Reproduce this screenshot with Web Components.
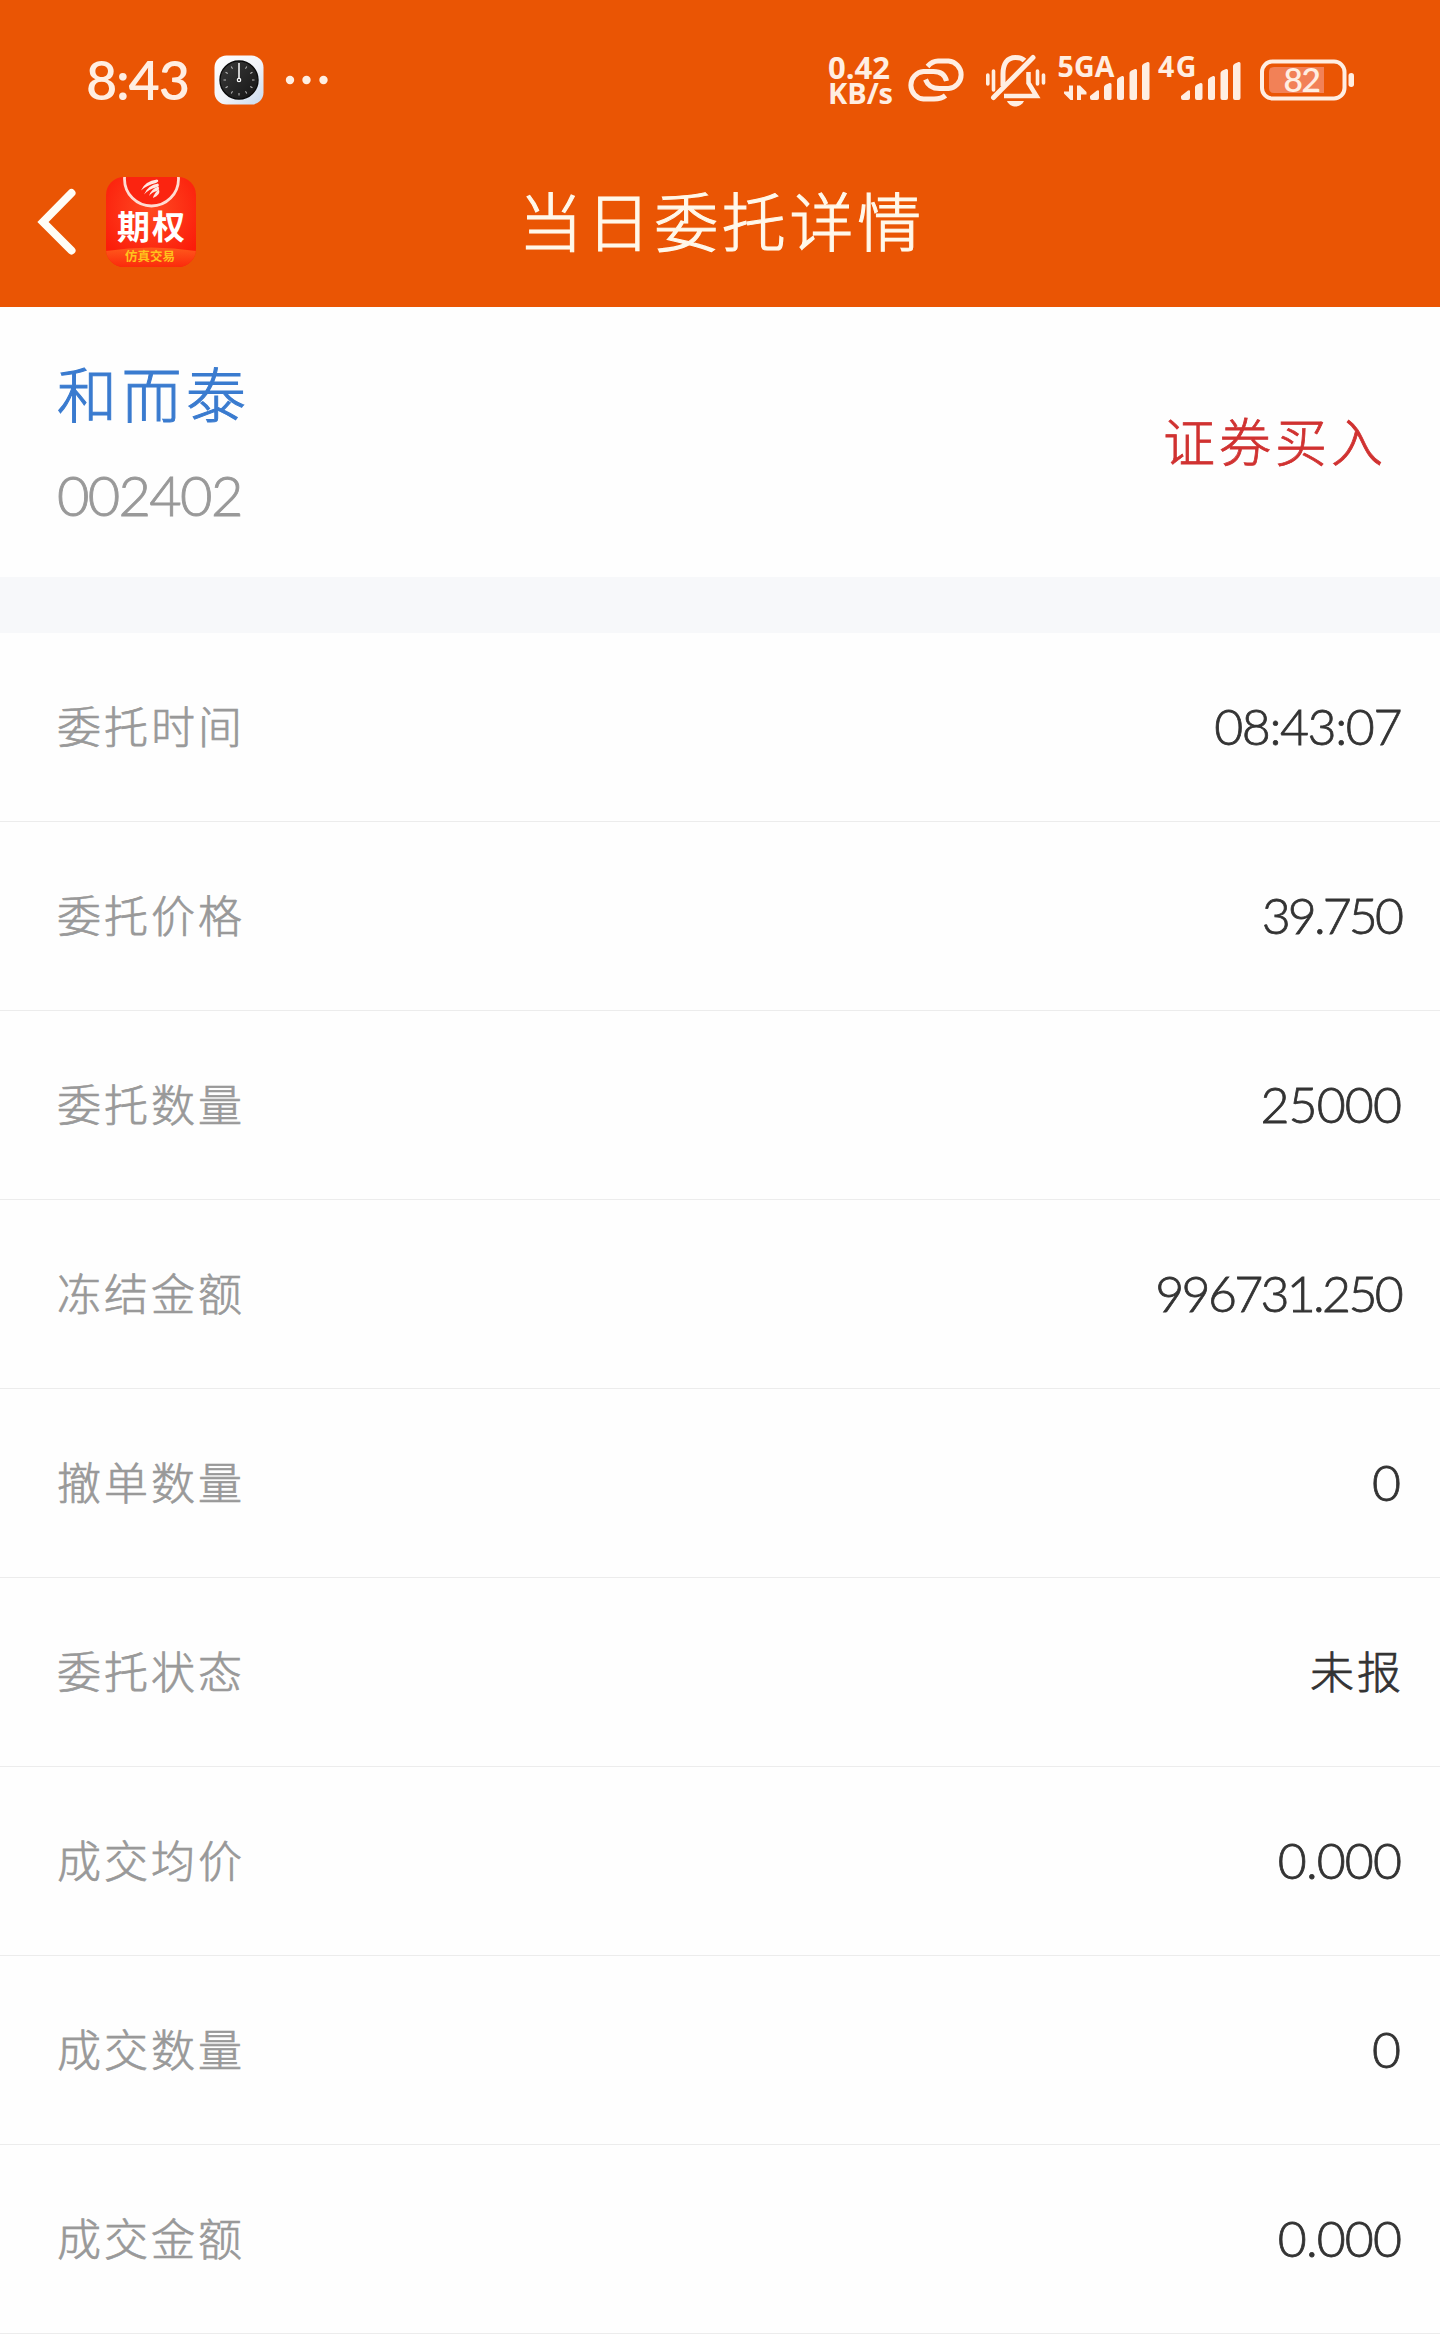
<!DOCTYPE html>
<html lang="zh-CN">
<head>
<meta charset="UTF-8">
<title>当日委托详情</title>
<style>
  html, body {
    margin: 0;
    background: #fff;
  }
  body {
    width: 1440px;
    height: 2350px;
    overflow: hidden;
    font-family: Lato, "Noto Sans CJK SC", sans-serif;
  }
</style>
</head>
<body>
<order-page></order-page>

<script>
class StatusBar extends HTMLElement {
  constructor() {
    super();
    this.attachShadow({ mode: "open" });
  }

  connectedCallback() {
    this.shadowRoot.innerHTML = `
      <style>
        :host {
          display: flex;
          justify-content: space-between;
          align-items: center;
          height: 160px;
          padding: 0 86px 0 86px;
          box-sizing: border-box;
          color: #ffeee2;
        }
        .side { display: flex; align-items: center; }
        svg { display: block; fill: currentColor; overflow: visible; }
        text { font-family: "Open Sans", sans-serif; font-weight: 700; }
        text.num { font-family: Lato, sans-serif; font-weight: 600; }
        .clock { margin-left: 24px; }
        .dots { margin-left: 21px; }
        .link { margin-left: 10px; }
        .bell { margin-left: 19px; }
        .sig { margin-left: 11px; }
        .sig2 { margin-left: 6px; }
        .battery { margin-left: 18px; }
      </style>
      <div class="side">
        <svg width="104" height="80" viewBox="86 40 104 80">
          <text class="num" x="86" y="99.5" font-size="54" textLength="104">8:43</text>
        </svg>
        <svg class="clock" width="50" height="50" viewBox="0 0 50 50">
          <defs>
            <linearGradient id="plate" x1="0" y1="0" x2="1" y2="1">
              <stop offset="0" stop-color="#fff"/><stop offset=".55" stop-color="#f1f3f8"/><stop offset="1" stop-color="#c8d9ee"/>
            </linearGradient>
            <linearGradient id="dial" x1="0" y1="0" x2="1" y2="1">
              <stop offset="0" stop-color="#3a3a3a"/><stop offset="1" stop-color="#161616"/>
            </linearGradient>
          </defs>
          <rect x=".5" y=".5" width="49" height="49" rx="12" fill="url(#plate)"/>
          <circle cx="25" cy="25" r="19" fill="url(#dial)" stroke="#0b0b0b" stroke-width="1.4"/>
          <g stroke="#bbb" stroke-width="1"></g>
          <path d="M25 8v16" stroke="#fff" stroke-width="1.5"/>
          <circle cx="25" cy="25" r="1.7" fill="#222" stroke="#fff" stroke-width="1.2"/>
        </svg>
        <svg class="dots" width="44" height="12" viewBox="0 0 44 12">
          <circle cx="5" cy="6" r="4.2"/><circle cx="21.500" cy="6" r="4.2"/><circle cx="38.500" cy="6" r="4.2"/>
        </svg>
      </div>
      <div class="side">
        <svg width="68" height="80" viewBox="828 40 68 80">
          <text x="828" y="79" font-size="31" textLength="62">0.42</text>
          <text x="828" y="104" font-size="29" textLength="65">KB/s</text>
        </svg>
        <svg class="link" width="60" height="60" viewBox="906 50 60 60" stroke="currentColor" stroke-width="5" style="fill:none">
          <path d="M927.500 66.500C931 62.500 934 61 938 61H948.500A13.800 13.800 0 0 1 948.500 88.500H939.500C932 88.500 928 86 925.500 79.500"/>
          <path d="M945.500 95.500C942 98.500 938 99 934 99H923.500A13.800 13.800 0 0 1 923.500 71.500H933.500C940 71.500 945 74.500 946.500 81"/>
        </svg>
        <svg class="bell" width="62" height="60" viewBox="985 50 62 60">
          <g fill="none" stroke="currentColor" stroke-width="4.500">
            <path d="M1003 86V74C1003 64 1007 57.500 1015.500 57.500C1019.500 57.500 1022.500 58.500 1024.500 60.500" stroke-width="5"/>
            <path d="M993.500 71v19M987.800 75v9M1037.500 71v13M1043.500 75v8" stroke-width="3.600" stroke-linecap="round"/>
            <path d="M1028.500 72V83L1036.500 96H1004"/>
            <path d="M993.500 97.500L1033 57.500" stroke-width="5" stroke-linecap="round"/>
          </g>
          <path d="M1007 101h17c-2 4-5 5.500-8.500 5.500s-6.500-1.500-8.500-5.500z"/>
        </svg>
        <svg class="sig" width="94" height="60" viewBox="1058 50 94 60">
          <text x="1057.500" y="77" font-size="28.500" textLength="57">5GA</text>
          <path d="M1069 85.500h4v14.500h-2.500l-6.500-6.500v-2h5zM1077 100V85.500h3l6.500 6.500v2.500h-5.500V100z"/>
          <path d="M1090 96l7-5.500q2-1 2 1V98q0 2-2 2h-5q-2 0-2-2zM1104 87q0-1.500 2-2.500l3.500-1.500q2-.5 2 1.500V98q0 2-2 2h-3.500q-2 0-2-2zM1117 80q0-1.500 2-2.500l3-1.500q2-.5 2 1.500V98q0 2-2 2h-3q-2 0-2-2zM1129.500 73q0-1.500 2-2.500l3.500-1.500q2-.5 2 1.500V98q0 2-2 2h-3.500q-2 0-2-2zM1142 66q0-1.500 2-2.500l3.500-1.500q2-.5 2 1.500V98q0 2-2 2h-3.500q-2 0-2-2z"/>
        </svg>
        <svg class="sig2" width="84" height="60" viewBox="1158 50 84 60">
          <text x="1158" y="77" font-size="28.500" textLength="38.500">4G</text>
          <path transform="translate(91)" d="M1090 96l7-5.500q2-1 2 1V98q0 2-2 2h-5q-2 0-2-2zM1104 87q0-1.500 2-2.500l3.500-1.500q2-.5 2 1.500V98q0 2-2 2h-3.500q-2 0-2-2zM1117 80q0-1.500 2-2.500l3-1.500q2-.5 2 1.500V98q0 2-2 2h-3q-2 0-2-2zM1129.500 73q0-1.500 2-2.500l3.500-1.500q2-.5 2 1.500V98q0 2-2 2h-3.500q-2 0-2-2zM1142 66q0-1.500 2-2.500l3.500-1.500q2-.5 2 1.500V98q0 2-2 2h-3.500q-2 0-2-2z"/>
        </svg>
        <svg class="battery" width="94" height="60" viewBox="1260 50 94 60">
          <rect x="1262" y="61.500" width="82.500" height="37" rx="10.500" fill="none" stroke="currentColor" stroke-width="4"/>
          <path d="M1324 67V93H1274q-5 0-5-5V72q0-5 5-5z" fill="#f28157"/>
          <rect x="1348.500" y="73" width="5.500" height="14" rx="2.700"/>
          <text class="num" x="1283.500" y="92" font-size="33.500" textLength="37.500">82</text>
        </svg>
      </div>
    `;
    // hour ticks round the dial, leaving out 12 where the hand points
    const ticks = this.shadowRoot.querySelector(".clock g");
    let marks = "";
    for (let i = 1; i < 12; i++) {
      marks += `<path d="M25 9.500v2.500" transform="rotate(${i * 30} 25 25)"/>`;
    }
    ticks.innerHTML = marks;
  }
}
customElements.define("status-bar", StatusBar);

class AppLogo extends HTMLElement {
  constructor() {
    super();
    this.attachShadow({ mode: "open" });
  }

  connectedCallback() {
    this.shadowRoot.innerHTML = `
      <style>
        :host { display: block; width: 90px; height: 90px; }
        svg { display: block; }
        text { font-family: "Noto Sans CJK SC", sans-serif; }
      </style>
      <svg width="90" height="90" viewBox="0 0 90 90">
        <defs>
          <clipPath id="tile"><rect width="90" height="90" rx="18"/></clipPath>
          <radialGradient id="glow" cx=".5" cy=".35" r=".65">
            <stop offset="0" stop-color="#ff4a22"/><stop offset="1" stop-color="#fb1c0a"/>
          </radialGradient>
          <linearGradient id="base" x1="0" y1="0" x2="0" y2="1">
            <stop offset="0" stop-color="#ff5a1c"/><stop offset="1" stop-color="#fb2a0c"/>
          </linearGradient>
        </defs>
        <g clip-path="url(#tile)">
          <rect width="90" height="90" fill="url(#glow)"/>
          <circle cx="45.500" cy="2" r="27" fill="#fb2410" stroke="#ffdcd2" stroke-width="2.800"/>
          <path d="M0 74Q45 67 90 74V90H0z" fill="url(#base)"/>
          <g fill="#ffe9e3">
            <path d="M35 13.500Q39 4 51 2.500Q54 4 50 6Q41 8 35 13.500z"/>
            <path d="M38 17.500Q42 8 52 6.500Q54.500 9 50 10.500Q43 12 38 17.500z"/>
            <path d="M43 19Q45 12 52.500 9.500Q54 13 51 14Q46 15 43 19z"/>
            <path d="M47 21Q48 16 53 12.500Q55 18 47 21z"/>
          </g>
          <text x="11" y="62" font-size="33" font-weight="700" fill="#fff" textLength="68">期权</text>
          <text x="19" y="83.500" font-size="12.500" font-weight="700" fill="#ffc21c" textLength="50">仿真交易</text>
        </g>
      </svg>
    `;
  }
}
customElements.define("app-logo", AppLogo);

class NavBar extends HTMLElement {
  constructor() {
    super();
    this.attachShadow({ mode: "open" });
  }

  connectedCallback() {
    this.shadowRoot.innerHTML = `
      <style>
        :host {
          display: grid;
          grid-template-columns: 1fr auto 1fr;
          align-items: center;
          height: 147px;
          padding: 0 37px 23px;
          box-sizing: border-box;
          color: #fff8ea;
        }
        .left { display: flex; align-items: center; gap: 28.5px; }
        svg { display: block; }
        .title {
          font-size: 64px;
          line-height: 90px;
          font-weight: 300;
          letter-spacing: 3.7px;
          margin-right: -3.7px;
          -webkit-text-stroke: 1.1px #fff8ea;
        }
      </style>
      <div class="left">
        <svg width="40" height="68" viewBox="0 0 40 68" fill="none" stroke="#fffdf5" stroke-width="8" stroke-linecap="round" stroke-linejoin="miter">
          <path d="M34.500 5L6 34L34.500 62.500"/>
        </svg>
        <app-logo></app-logo>
      </div>
      <div class="title"><slot></slot></div>
      <div></div>
    `;
  }
}
customElements.define("nav-bar", NavBar);

class StockSummary extends HTMLElement {
  constructor() {
    super();
    this.attachShadow({ mode: "open" });
  }

  connectedCallback() {
    this.shadowRoot.innerHTML = `
      <style>
        :host {
          display: flex;
          justify-content: space-between;
          align-items: center;
          height: 270px;
          padding: 0 55px 0 57px;
          box-sizing: border-box;
          font-weight: 300;
        }
        .name {
          font-size: 60px;
          line-height: 86px;
          letter-spacing: 4.5px;
          color: #3a7bcf;
          -webkit-text-stroke: 1px #3a7bcf;
        }
        .code {
          font-size: 56px;
          line-height: 70px;
          letter-spacing: -1.7px;
          margin: 22px 0 3px;
          color: #999;
          -webkit-text-stroke: .9px #999;
        }
        .side {
          font-size: 52px;
          line-height: 76px;
          letter-spacing: 4px;
          margin-right: -2px;
          color: #d03231;
          -webkit-text-stroke: .8px #d03231;
        }
      </style>
      <div>
        <div class="name"><slot name="name"></slot></div>
        <div class="code"><slot name="code"></slot></div>
      </div>
      <div class="side"><slot name="side"></slot></div>
    `;
  }
}
customElements.define("stock-summary", StockSummary);

class DetailRow extends HTMLElement {
  constructor() {
    super();
    this.attachShadow({ mode: "open" });
  }

  connectedCallback() {
    this.shadowRoot.innerHTML = `
      <style>
        :host {
          display: flex;
          justify-content: space-between;
          align-items: center;
          height: 189px;
          padding: 0 39px 0 57px;
          box-sizing: border-box;
          border-bottom: 1px solid #ececec;
          font-weight: 300;
        }
        .label {
          font-size: 44px;
          line-height: 64px;
          letter-spacing: 3px;
          color: #999;
          -webkit-text-stroke: .7px #999;
        }
        .value {
          font-size: 50px;
          line-height: 64px;
          letter-spacing: var(--track, 0);
          padding-bottom: 2px;
          color: #333;
          -webkit-text-stroke: .8px #333;
        }
        :host([cjk]) .value {
          font-size: 44px;
          letter-spacing: 3px;
          margin-right: -3px;
          padding-bottom: 0;
          -webkit-text-stroke: .7px #333;
        }
      </style>
      <span class="label">${this.getAttribute("label")}</span>
      <span class="value"><slot></slot></span>
    `;
  }
}
customElements.define("detail-row", DetailRow);

class OrderPage extends HTMLElement {
  constructor() {
    super();
    this.attachShadow({ mode: "open" });
  }

  connectedCallback() {
    this.shadowRoot.innerHTML = `
      <style>
        :host { display: block; background: #fefefe; }
        header { background: #ea5504; }
        .gap { height: 56px; background: #f7f8fa; }
      </style>
      <header>
        <status-bar></status-bar>
        <nav-bar>当日委托详情</nav-bar>
      </header>
      <stock-summary>
        <span slot="name">和而泰</span>
        <span slot="code">002402</span>
        <span slot="side">证券买入</span>
      </stock-summary>
      <div class="gap"></div>
      <main>
        <detail-row label="委托时间" style="--track: -1.4px">08:43:07</detail-row>
        <detail-row label="委托价格" style="--track: -2.9px">39.750</detail-row>
        <detail-row label="委托数量" style="--track: -.9px">25000</detail-row>
        <detail-row label="冻结金额" style="--track: -2.7px">996731.250</detail-row>
        <detail-row label="撤单数量">0</detail-row>
        <detail-row label="委托状态" cjk>未报</detail-row>
        <detail-row label="成交均价" style="--track: -.9px">0.000</detail-row>
        <detail-row label="成交数量">0</detail-row>
        <detail-row label="成交金额" style="--track: -.9px">0.000</detail-row>
      </main>
    `;
  }
}
customElements.define("order-page", OrderPage);
</script>
</body>
</html>
